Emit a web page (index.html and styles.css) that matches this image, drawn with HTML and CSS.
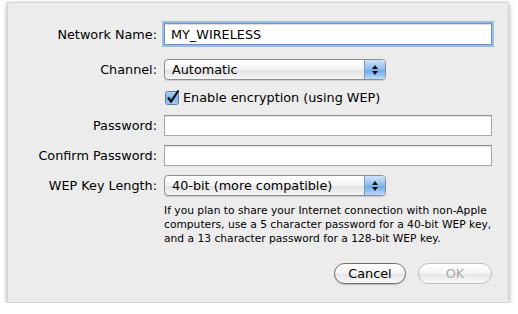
FILE: index.html
```html
<!DOCTYPE html>
<html lang="en">
<head>
    <meta charset="UTF-8">
    <title>Network Settings</title>
    <link rel="stylesheet" href="styles.css">
</head>
<body>
    <div class="sheet">
        <div class="form">
            <label class="label">Network Name:</label>
            <div class="field focused">MY_WIRELESS</div>

            <label class="label row-channel">Channel:</label>
            <div class="popup row-channel">
                <span class="popup-text">Automatic</span>
                <span class="stepper">
                    <svg width="8" height="12" viewBox="0 0 8 12">
                        <path d="M4 1 L7 5 L1 5 Z" fill="#111"/>
                        <path d="M4 11 L7 7 L1 7 Z" fill="#111"/>
                    </svg>
                </span>
            </div>

            <span class="row-check"></span>
            <div class="check row-check">
                <svg class="box" width="15" height="15" viewBox="0 0 15 15">
                    <defs>
                        <linearGradient id="cb" x1="0" y1="0" x2="0" y2="1">
                            <stop offset="0" stop-color="#b9d6f5"/>
                            <stop offset="0.5" stop-color="#7fb0e6"/>
                            <stop offset="1" stop-color="#a6d0f7"/>
                        </linearGradient>
                    </defs>
                    <rect x="0.5" y="1.5" width="13" height="13" rx="2" fill="url(#cb)" stroke="#5a7ea8"/>
                    <path d="M3 7.5 L6 11.5 L13.5 0.5" fill="none" stroke="#111" stroke-width="2.2"/>
                </svg>
                <span>Enable encryption (using WEP)</span>
            </div>

            <label class="label row-pass">Password:</label>
            <div class="field row-pass"></div>

            <label class="label row-confirm">Confirm Password:</label>
            <div class="field row-confirm"></div>

            <label class="label row-key">WEP Key Length:</label>
            <div class="popup row-key">
                <span class="popup-text">40-bit (more compatible)</span>
                <span class="stepper">
                    <svg width="8" height="12" viewBox="0 0 8 12">
                        <path d="M4 1 L7 5 L1 5 Z" fill="#111"/>
                        <path d="M4 11 L7 7 L1 7 Z" fill="#111"/>
                    </svg>
                </span>
            </div>

            <span class="row-help"></span>
            <p class="help row-help">If you plan to share your Internet connection with non-Apple computers, use a 5 character password for a 40-bit WEP key, and a 13 character password for a 128-bit WEP key.</p>
        </div>

        <div class="actions">
            <button class="btn">Cancel</button>
            <button class="btn disabled">OK</button>
        </div>
    </div>
</body>
</html>
```

FILE: styles.css
```css
* {
    margin: 0;
    padding: 0;
    box-sizing: border-box;
}

body {
    background: #ffffff;
    font-family: 'DejaVu Sans', 'Liberation Sans', sans-serif;
    font-size: 12.8px;
    color: #000;
}

.sheet {
    margin: 2px 0 0 7px;
    width: 502px;
    height: 301px;
    background: #ececec;
    border: 1px solid #d4d4d4;
    box-shadow: 0 2px 5px rgba(0, 0, 0, 0.35);
    padding-top: 20px;
}

.form {
    display: grid;
    grid-template-columns: 149px 328px;
    column-gap: 7px;
    align-items: center;
}

.label {
    text-align: right;
}

.field {
    height: 21px;
    background: #fff;
    border: 1px solid #a8a8a8;
    border-top-color: #8c8c8c;
    box-shadow: inset 0 1px 1px rgba(0, 0, 0, 0.12);
    padding: 1px 0 0 5px;
    line-height: 18px;
}

.field.focused {
    height: 22px;
    border-color: #6f93bd;
    box-shadow: 0 0 0 2px #9cbde2, inset 0 1px 1px rgba(0, 0, 0, 0.15);
    padding-left: 6px;
    line-height: 19px;
}

.popup {
    width: 222px;
    height: 21px;
    display: flex;
    align-items: center;
    border: 1px solid #8e8e8e;
    border-radius: 4px;
    background: linear-gradient(#ffffff, #f3f3f3 50%, #e2e2e2 52%, #f5f5f5);
    box-shadow: 0 1px 1px rgba(0, 0, 0, 0.15);
    overflow: hidden;
}

.popup-text {
    flex: 1;
    padding-left: 7px;
}

.stepper {
    width: 21px;
    height: 100%;
    display: flex;
    align-items: center;
    justify-content: center;
    border-left: 1px solid #7797c0;
    background: linear-gradient(#cfe4fb, #8ab9ec 50%, #6aa4e6 52%, #b8dbfb);
}

.row-channel {
    margin-top: 14px;
}

.row-check {
    margin-top: 9px;
}

.check {
    display: flex;
    align-items: center;
    gap: 3px;
    height: 16px;
}

.check .box {
    margin-left: 1px;
}

.row-pass {
    margin-top: 10px;
}

.row-confirm {
    margin-top: 9px;
}

.row-key {
    margin-top: 9px;
}

.row-help {
    margin-top: 8px;
}

.help {
    font-size: 10.7px;
    line-height: 14px;
    width: 334px;
}

.actions {
    display: flex;
    justify-content: flex-end;
    gap: 12px;
    padding-right: 16px;
    margin-top: 17px;
}

.btn {
    width: 72px;
    height: 21px;
    border: 1px solid #6e6e6e;
    border-radius: 11px;
    background: linear-gradient(#ffffff, #f4f4f4 50%, #e4e4e4 52%, #fafafa);
    font-family: inherit;
    font-size: 12.8px;
    color: #000;
    box-shadow: 0 1px 1px rgba(0, 0, 0, 0.2);
}

.btn.disabled {
    width: 74px;
    color: #a8a8a8;
    border-color: #bdbdbd;
    box-shadow: none;
}
```
